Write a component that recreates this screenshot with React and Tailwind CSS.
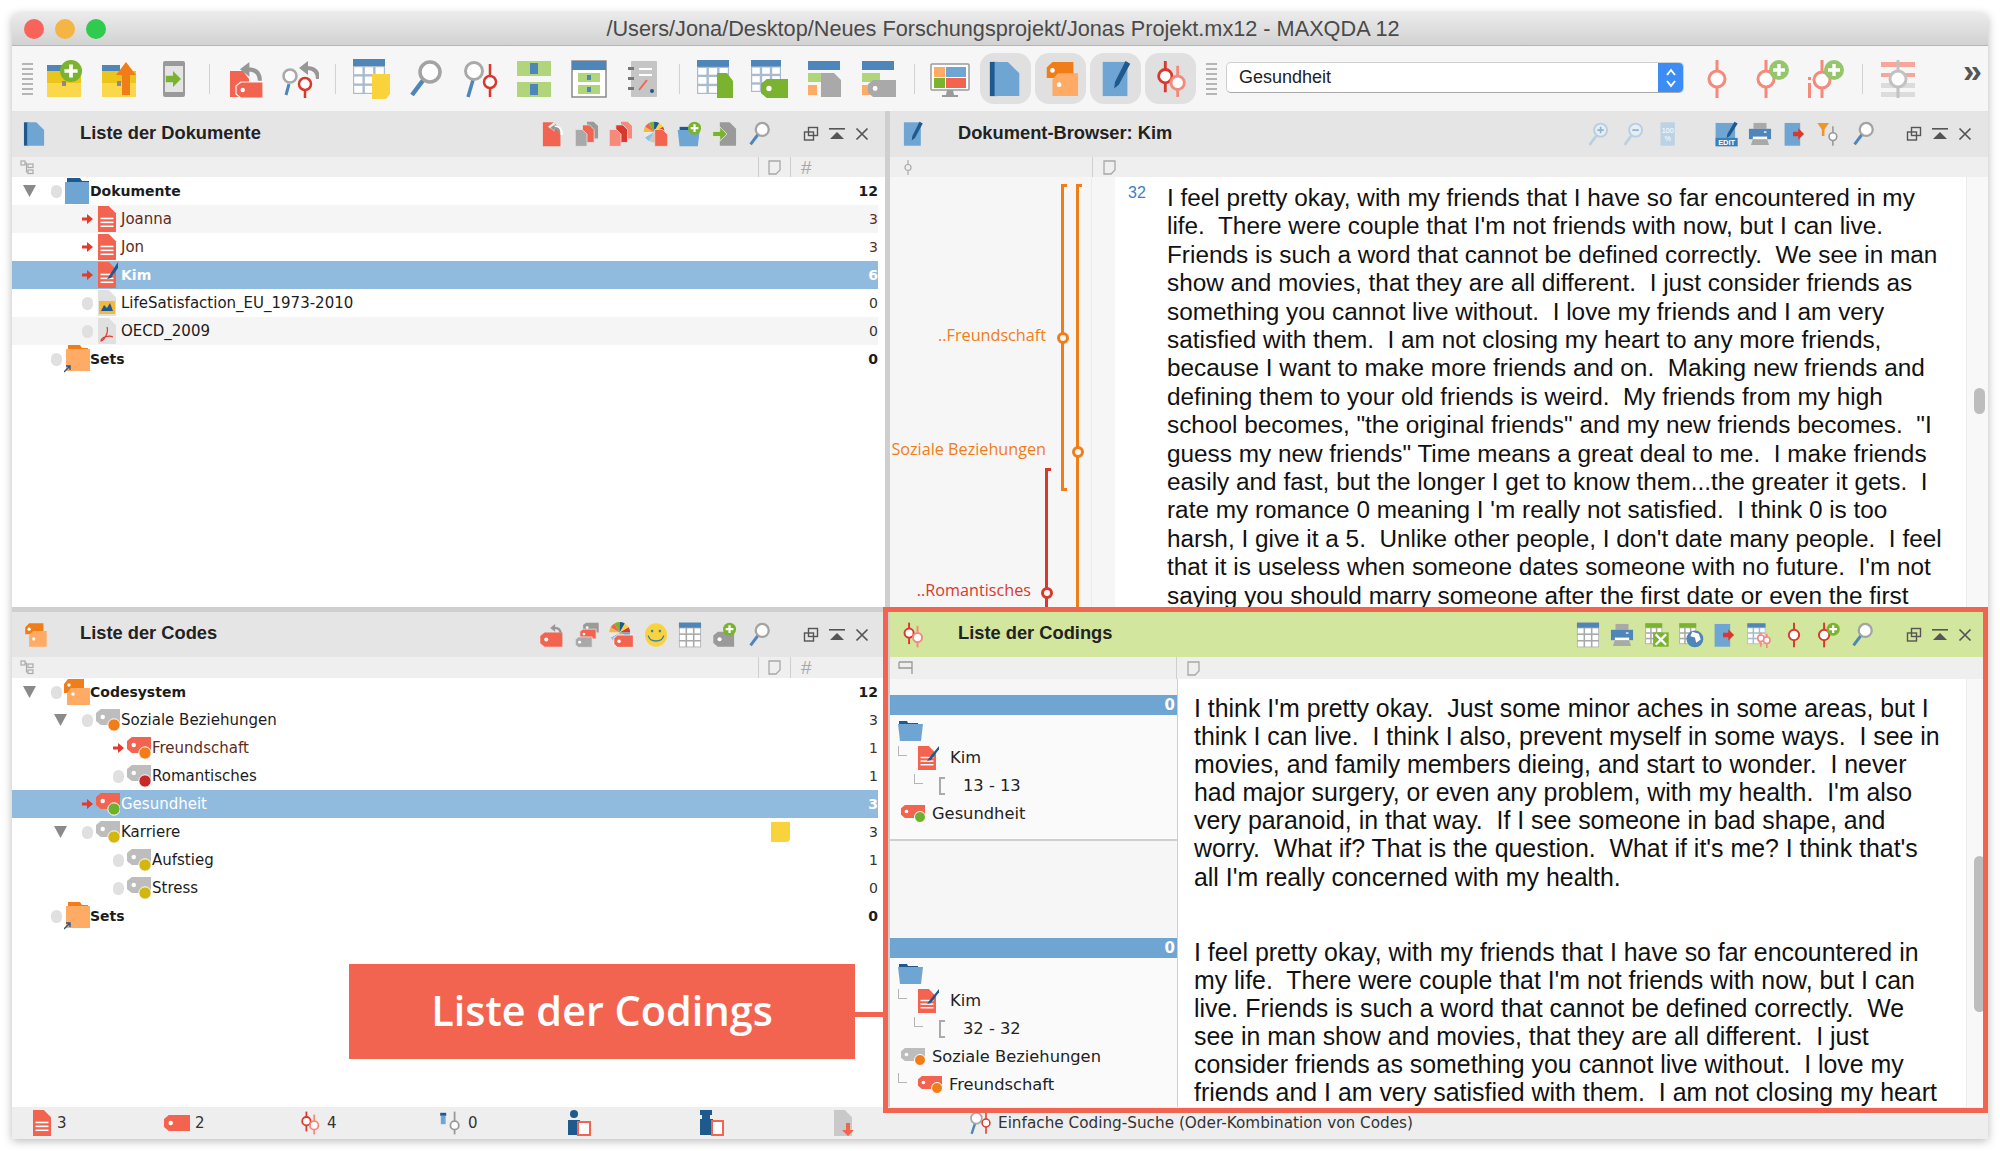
import React from "react";

const RED = "#f26450";
const BLUE = "#6ea5d3";
const NAVY = "#1f5a8f";
const GREEN = "#7ab32e";
const LGREEN = "#b1d57a";
const YELLOW = "#f9d33c";
const GRAY = "#a9a9a9";
const ORANGE = "#f07d18";
const LORANGE = "#ffab66";

const Doc = ({ x = 8, y = 2, w = 24, h = 36, c = RED, lines, edge }) => (
  <g>
    <path d={`M${x} ${y}h${w * 0.6}l${w * 0.4} ${w * 0.4}V${y + h}H${x}z`} fill={c} stroke={edge} strokeWidth={edge ? 1.2 : 0} />
    {lines && [0.45, 0.6, 0.75].map((f) => <rect key={f} x={x + w * 0.14} y={y + h * f} width={w * 0.72} height={h * 0.06} fill="#fff" />)}
  </g>
);
const Tag = ({ x = 4, y = 10, w = 32, h = 20, c = RED, hole = "#fff", edge }) => (
  <g>
    <path d={`M${x + h * 0.3} ${y}H${x + w}V${y + h}H${x + h * 0.3}L${x} ${y + h * 0.75}V${y + h * 0.25}z`} fill={c} stroke={edge} strokeWidth={edge ? 1.2 : 0} />
    <circle cx={x + h * 0.42} cy={y + h * 0.5} r={h * 0.14} fill={hole} />
  </g>
);
const Sign = ({ x = 20, y1 = 2, y2 = 38, cy = 20, r = 6, c = "#d9392c", sw = 2.5 }) => (
  <g>
    <line x1={x} x2={x} y1={y1} y2={y2} stroke={c} strokeWidth={sw} />
    <circle cx={x} cy={cy} r={r} fill="#fff" stroke={c} strokeWidth={sw} />
  </g>
);
const Plus = ({ x = 28, y = 11, r = 10, c = GREEN }) => (
  <g>
    <circle cx={x} cy={y} r={r} fill={c} />
    <path d={`M${x - r * 0.6} ${y}h${r * 1.2}M${x} ${y - r * 0.6}v${r * 1.2}`} stroke="#fff" strokeWidth={r * 0.34} />
  </g>
);
const Grid = ({ x = 4, y = 3, w = 30, h = 34, head = "#4f86ba", line = "#a9bccf", cols = 3, rows = 3 }) => {
  const top = h * 0.2;
  const cw = w / cols;
  const rh = (h - top) / rows;
  return (
    <g>
      <rect x={x} y={y} width={w} height={h} fill={line} />
      <rect x={x} y={y} width={w} height={top} fill={head} />
      {Array.from({ length: cols * rows }).map((_, i) => (
        <rect key={i} x={x + (i % cols) * cw + 1.2} y={y + top + Math.floor(i / cols) * rh + 1.2} width={cw - 2.4} height={rh - 2.4} fill="#fff" />
      ))}
    </g>
  );
};
const Arrow = ({ x = 10, y = 20, c = GREEN, s = 1 }) => (
  <path transform={`translate(${x} ${y}) scale(${s})`} d="M-9 -4h9v-6l10 10l-10 10v-6h-9z" fill={c} />
);
// gray return arrow, curving up and to the left
const BackArrow = ({ x = 0, y = 0, s = 1, c = "#979797" }) => (
  <g transform={`translate(${x} ${y}) scale(${s})`}>
    <path d="M18 17C18 9 14 6 7 6" stroke={c} strokeWidth="4" fill="none" />
    <path d="M8 -1L-1 6l9 7z" fill={c} />
  </g>
);
const Mag = () => (
  <g>
    <line x1="7" y1="36" x2="19" y2="20" stroke="#4f86ba" strokeWidth="4.5" />
    <circle cx="25" cy="13" r="10" fill="#fff" stroke="#a3a3a3" strokeWidth="3.5" />
  </g>
);
const PIE_COLORS = ["#f5b93a", "#f26450", "#7ab32e", "#1f5a8f", "#f9d33c", "#d9392c", "#6ea5d3", "#b1d57a", "#f07d18", "#c9c9c9", "#8fc1e8", "#e9e9e9"];
const Pie = ({ x = 15, y = 15, r = 12 }) => {
  const step = (Math.PI * 2) / PIE_COLORS.length;
  return (
    <g>
      {PIE_COLORS.map((c, i) => {
        const a = -Math.PI + i * step;
        const b = a + step;
        return <path key={c} d={`M${x} ${y}L${x + r * Math.cos(a)} ${y + r * Math.sin(a)}A${r} ${r} 0 0 1 ${x + r * Math.cos(b)} ${y + r * Math.sin(b)}z`} fill={c} />;
      })}
    </g>
  );
};
const Briefcase = () => (
  <g>
    <rect x="3" y="6" width="18" height="9" fill="#4f86ba" />
    <rect x="3" y="12" width="34" height="12" fill="#ebc519" />
    <rect x="3" y="24" width="34" height="14" fill="#fbd84a" />
    <rect x="18" y="22" width="4" height="5" fill="#8a8a8a" />
  </g>
);

const ICONS = {
  addFolder: <><Briefcase /><Plus x={27} y={12} r={11} /></>,
  upFolder: <><Briefcase /><path d="M27 3l10 13h-6v20h-8V16h-6z" fill={ORANGE} /></>,
  tablet: <><rect x="10" y="2" width="22" height="36" rx="2" fill="#9a9a9a" /><rect x="12" y="7" width="18" height="26" fill="#e4e4e4" /><Arrow x={20} y={20} s={0.8} /></>,
  docBack: <><path d="M5 12h13l6 8v18H5z" fill={RED} /><Tag x={11} y={23} w={27} h={16} edge="#f6f6f6" /><BackArrow x={16} y={4} s={1.05} /></>,
  docRet: <><Doc x={6} y={2} w={27} h={37} /><path d="M14 9l9-7l2 5c5 0 12 3 12 14h-4c0-6-4-9-9-9v4z" fill="#fff" /><BackArrow x={18} y={6} s={0.75} /></>,
  tagBack: <><Tag x={2} y={16} w={34} h={22} /><BackArrow x={18} y={4} s={0.85} /></>,
  searchBack: <><line x1="7" y1="36" x2="10" y2="25" stroke="#4f86ba" strokeWidth="3" /><circle cx="11" cy="17" r="6.5" fill="#fff" stroke={GRAY} strokeWidth="2.6" /><BackArrow x={21} y={3} s={1} /><Sign x={26} y1={20} y2={39} cy={25} r={6} /></>,
  tableNote: <><Grid x={2} y={0} w={32} h={35} /><path d="M21 15h18v20l-4 5H21z" fill={YELLOW} /></>,
  mag: <Mag />,
  magCode: <><line x1="8" y1="38" x2="13" y2="21" stroke="#4f86ba" strokeWidth="3.5" /><circle cx="14" cy="12" r="8.5" fill="#fff" stroke={GRAY} strokeWidth="3" /><Sign x={30} y1={5} y2={38} cy={23} r={6} /></>,
  split: <><rect x="3" y="2" width="34" height="15" fill={LGREEN} /><rect x="3" y="23" width="34" height="15" fill={LGREEN} /><rect x="16" y="4" width="8" height="11" fill="#4f86ba" /><rect x="16" y="25" width="8" height="11" fill="#4f86ba" /></>,
  frame: <><rect x="3" y="2" width="34" height="36" fill="#fff" stroke="#8a8a8a" strokeWidth="1.5" /><rect x="3" y="2" width="34" height="9" fill="#4f86ba" /><rect x="9" y="14" width="22" height="9" fill={LGREEN} /><rect x="9" y="26" width="22" height="9" fill={LGREEN} /><rect x="18" y="16" width="4" height="5" fill="#4f86ba" /><rect x="18" y="28" width="4" height="5" fill="#4f86ba" /></>,
  notebook: <><rect x="8" y="2" width="26" height="36" rx="1" fill="#c5c5c5" /><rect x="5" y="8" width="6" height="3" fill="#777" /><rect x="5" y="18" width="6" height="3" fill="#777" /><rect x="5" y="28" width="6" height="3" fill="#777" /><path d="M16 10h13M16 16h13" stroke="#fff" strokeWidth="2" /><path d="M16 31l8-10" stroke={RED} strokeWidth="2" /><circle cx="29" cy="32" r="2" fill={NAVY} /></>,
  tableDoc: <><Grid x={2} y={1} w={32} h={34} /><path d="M22 14h10l6 8v17H22z" fill={GREEN} /></>,
  tableTag: <><Grid x={2} y={1} w={30} h={32} /><Tag x={12} y={20} w={27} h={19} c={GREEN} /></>,
  stackDoc: <><rect x="4" y="2" width="32" height="9" fill="#4f86ba" /><rect x="4" y="14" width="18" height="9" fill={LGREEN} /><rect x="4" y="26" width="9" height="10" fill={LORANGE} /><path d="M17 14h13l7 7v17H17z" fill={GRAY} /></>,
  stackTag: <><rect x="4" y="2" width="32" height="9" fill="#4f86ba" /><rect x="4" y="14" width="18" height="9" fill={LGREEN} /><rect x="4" y="26" width="9" height="10" fill={LORANGE} /><Tag x={10} y={21} w={28} h={17} c={GRAY} /></>,
  monitor: <><rect x="1" y="5" width="38" height="26" rx="1" fill="#fff" stroke="#9a9a9a" strokeWidth="1.5" /><rect x="4" y="8" width="11" height="10" fill={LORANGE} /><rect x="16" y="8" width="20" height="10" fill={BLUE} /><rect x="4" y="19" width="11" height="10" fill={GREEN} /><rect x="16" y="19" width="20" height="10" fill={RED} /><path d="M17 31h6l1 5h4v2H12v-2h4z" fill="#9a9a9a" /></>,
  docs: <><rect x="3" y="2" width="7" height="36" fill={NAVY} /><path d="M8 2h14l12 12v24H8z" fill={BLUE} /></>,
  codes: <><path d="M5 8l6-6h22v17H5z" fill={ORANGE} /><circle cx="11" cy="11" r="2.5" fill="#fff" /><path d="M11 20l6-6h21v24H11z" fill={LORANGE} /><circle cx="18" cy="26" r="2.5" fill="#fff" /></>,
  penDoc: <><rect x="6" y="2" width="26" height="36" fill={BLUE} /><path d="M30 1l5 3l-12 22l-5 4l1-7z" fill={NAVY} /></>,
  redCodes: <><Sign x={14} y1={1} y2={34} cy={17} r={7} c="#d9392c" sw={3} /><Sign x={27} y1={6} y2={39} cy={24} r={7} c="#f58a7c" sw={3} /></>,
  code1: <Sign x={20} y1={1} y2={39} cy={20} r={8} c="#f58a7c" sw={3} />,
  codePlus: <><Sign x={14} y1={1} y2={39} cy={20} r={8} c="#f58a7c" sw={3} /><Plus x={27} y={11} r={10} c="#96c66c" /></>,
  iCodePlus: <><rect x="2" y="24" width="3" height="15" fill="#f58a7c" /><rect x="2" y="18" width="3" height="3" fill="#f58a7c" /><Sign x={16} y1={1} y2={39} cy={21} r={8} c="#f58a7c" sw={3} /><Plus x={28} y={11} r={10} c="#96c66c" /></>,
  sliders: <><rect x="3" y="3" width="34" height="5" fill="#f5a79c" /><rect x="3" y="14" width="34" height="4" fill="#f5a79c" /><rect x="3" y="24" width="34" height="5" fill="#dcdcdc" /><rect x="3" y="33" width="34" height="5" fill="#dcdcdc" /><Sign x={20} y1={1} y2={39} cy={20} r={8} c="#c2c2c2" sw={3} /></>,
  twoDocs: <><Doc x={20} y={1} w={17} h={26} c="#9a9a9a" /><Doc x={13} y={6} w={18} h={27} edge="#e5e5e5" /><Doc x={2} y={13} w={18} h={26} c={GRAY} edge="#e5e5e5" /></>,
  twoReds: <><Doc x={20} y={1} w={17} h={26} c="#f58a7c" /><Doc x={12} y={6} w={18} h={27} c="#d9392c" edge="#e5e5e5" /><Doc x={2} y={13} w={18} h={26} c="#f58a7c" edge="#e5e5e5" /></>,
  pieDoc: <><Pie x={17} y={17} r={16} /><Doc x={18} y={13} w={20} h={26} edge="#e5e5e5" /></>,
  pieTag: <><Pie x={18} y={16} r={16} /><Tag x={9} y={20} w={30} h={19} edge="#fff" /></>,
  blueFolderPlus: <><rect x="4" y="9" width="14" height="6" fill={NAVY} /><path d="M1 14h34l-3 25H4z" fill={BLUE} /><Plus x={27} y={11} r={10} /></>,
  arrowDoc: <><Doc x={12} y={2} w={25} h={36} c="#9a9a9a" /><path d="M1 16h11v-7l11 11l-11 11v-7H1z" fill={GREEN} stroke="#fff" strokeWidth="1" /></>,
  zoomIn: <><line x1="7" y1="37" x2="17" y2="23" stroke="#b8cfe3" strokeWidth="4" /><circle cx="24" cy="14" r="10" fill="#e6edf3" stroke="#b8cfe3" strokeWidth="3" /><path d="M19 14h10M24 9v10" stroke="#8fb3d2" strokeWidth="2.5" /></>,
  zoomOut: <><line x1="7" y1="37" x2="17" y2="23" stroke="#b8cfe3" strokeWidth="4" /><circle cx="24" cy="14" r="10" fill="#e6edf3" stroke="#b8cfe3" strokeWidth="3" /><path d="M19 14h10" stroke="#8fb3d2" strokeWidth="2.5" /></>,
  zoom100: <><rect x="10" y="2" width="22" height="36" fill="#bcd3e6" /><text x="21" y="18" fontSize="11" textAnchor="middle" fill="#fff" fontFamily="Liberation Sans, sans-serif">100</text><text x="21" y="31" fontSize="11" textAnchor="middle" fill="#fff" fontFamily="Liberation Sans, sans-serif">%</text></>,
  edit: <><rect x="4" y="3" width="30" height="35" fill={BLUE} /><path d="M33 1l5 3l-12 19l-5 3l1-6z" fill={NAVY} /><rect x="4" y="26" width="34" height="13" fill="#3b7fb8" /><text x="21" y="36.5" fontSize="11.5" fontWeight="700" textAnchor="middle" fill="#fff" fontFamily="Liberation Sans, sans-serif">EDIT</text></>,
  printer: <><rect x="10" y="3" width="20" height="9" fill="#a9a9a9" /><rect x="3" y="12" width="34" height="16" fill="#4f86ba" /><rect x="26" y="16" width="4" height="2" fill="#fff" /><rect x="9" y="24" width="22" height="4" fill="#fff" /><path d="M9 28h22l3 9H6z" fill="#a9a9a9" /></>,
  docArrow: <><rect x="4" y="3" width="24" height="35" fill={BLUE} /><Arrow x={25} y={20} c="#d9392c" s={0.9} /></>,
  filterCode: <><path d="M2 3h18l-7 10v10h-4V13z" fill="#f0952b" /><Sign x={26} y1={8} y2={38} cy={24} r={6} c="#9a9a9a" sw={2.5} /></>,
  smile: <><ellipse cx="20" cy="20" rx="17" ry="18" fill={YELLOW} /><circle cx="14" cy="14" r="2" fill="#3b7fb8" /><circle cx="26" cy="14" r="2" fill="#3b7fb8" /><path d="M8 21c3 11 21 11 24 0" stroke="#3b7fb8" strokeWidth="2.2" fill="none" /></>,
  table: <Grid x={3} y={1} w={34} h={38} line="#a9a9a9" />,
  tags: <><Tag x={14} y={1} w={24} h={15} c="#9a9a9a" /><Tag x={9} y={11} w={25} h={15} edge="#e5e5e5" /><Tag x={2} y={23} w={26} h={16} c={GRAY} edge="#e5e5e5" /></>,
  tagPlus: <><Tag x={2} y={15} w={32} h={23} c="#9a9a9a" /><Plus x={27} y={11} r={10} /></>,
  excel: <><Grid x={2} y={2} w={26} h={32} head={GREEN} line="#a9a9a9" /><rect x="14" y="16" width="24" height="22" fill={GREEN} /><path d="M18 19l16 16M34 19l-16 16" stroke="#fff" strokeWidth="3.5" /></>,
  tableGlobe: <><Grid x={2} y={2} w={26} h={32} head={GREEN} line="#a9a9a9" /><circle cx="26" cy="26" r="13" fill="#4f86ba" /><path d="M22 15l10 3l3 9l-7 5l-2-8l-7-2z" fill="#fff" /></>,
  tableCodes: <><Grid x={2} y={2} w={28} h={32} /><Sign x={23} y1={16} y2={38} cy={25} r={5} c="#f58a7c" /><Sign x={32} y1={18} y2={40} cy={28} r={5} c="#f58a7c" /></>,
  redCode: <Sign x={20} y1={1} y2={39} cy={20} r={8} c="#d9392c" sw={3} />,
  redCodePlus: <><Sign x={14} y1={1} y2={39} cy={20} r={8} c="#d9392c" sw={3} /><Plus x={28} y={11} r={10} /></>,
};

function Icon({ name, size = 40 }) {
  return (
    <svg width={size} height={size} viewBox="0 0 40 40">
      {ICONS[name]}
    </svg>
  );
}

function Grip() {
  return (
    <div className="flex flex-col gap-[3px] w-[11px] shrink-0">
      {Array.from({ length: 7 }).map((_, i) => (
        <div key={i} className="h-[2px] bg-[#b5b5b5]" />
      ))}
    </div>
  );
}

const Sep = () => <div className="w-px h-[30px] bg-[#d2d2d2] mx-[8px] shrink-0" />;

function Slot({ name }) {
  return (
    <div className="w-[54.5px] flex justify-center shrink-0">
      <Icon name={name} size={40} />
    </div>
  );
}

function ToggleBtn({ name }) {
  return (
    <div className="w-[51px] h-[51px] rounded-[14px] flex items-center justify-center shrink-0 bg-[#e0e0e0]">
      <Icon name={name} size={38} />
    </div>
  );
}

function Toolbar() {
  return (
    <div className="h-[65px] bg-[#f6f6f6] flex items-center pl-[10px] shrink-0">
      <Grip />
      <div className="w-[4px] shrink-0" />
      <Slot name="addFolder" />
      <Slot name="upFolder" />
      <Slot name="tablet" />
      <Sep />
      <Slot name="docBack" />
      <Slot name="searchBack" />
      <Sep />
      <Slot name="tableNote" />
      <Slot name="mag" />
      <Slot name="magCode" />
      <Slot name="split" />
      <Slot name="frame" />
      <Slot name="notebook" />
      <Sep />
      <Slot name="tableDoc" />
      <Slot name="tableTag" />
      <Slot name="stackDoc" />
      <Slot name="stackTag" />
      <Sep />
      <Slot name="monitor" />
      <div className="w-[3px] shrink-0" />
      <div className="flex gap-[4px]">
        <ToggleBtn name="docs" />
        <ToggleBtn name="codes" />
        <ToggleBtn name="penDoc" />
        <ToggleBtn name="redCodes" />
      </div>
      <div className="w-[10px] shrink-0" />
      <Grip />
      <div className="w-[9px] shrink-0" />
      <div className="w-[458px] h-[31px] mt-[-2px] bg-white rounded-[5px] border border-[#cfcfcf] border-b-[#a8a8a8] flex items-center justify-between overflow-hidden shrink-0">
        <span className="pl-[12px] text-[18px] text-[#222] font-['Liberation_Sans',sans-serif]">Gesundheit</span>
        <div className="w-[25px] h-full bg-[#3b8df5] flex items-center justify-center">
          <svg width="14" height="24" viewBox="0 0 14 24" fill="none" stroke="#fff" strokeWidth="2">
            <path d="M3 9l4-5l4 5M3 15l4 5l4-5" />
          </svg>
        </div>
      </div>
      <div className="w-[6px] shrink-0" />
      <Slot name="code1" />
      <Slot name="codePlus" />
      <Slot name="iCodePlus" />
      <Sep />
      <Slot name="sliders" />
      <div className="ml-[38px] text-[34px] leading-none font-bold text-[#555] font-['Liberation_Sans',sans-serif] mt-[-18px]">»</div>
    </div>
  );
}

function WinControls() {
  return (
    <div className="flex items-center">
      <div className="w-[25.5px] flex justify-center">
        <svg width="16" height="16" viewBox="0 0 16 16" fill="none" stroke="#555" strokeWidth="1.4">
          <rect x="5.5" y="1.5" width="9" height="8" />
          <rect x="1.5" y="6" width="9" height="8" />
        </svg>
      </div>
      <div className="w-[25.5px] flex justify-center">
        <svg width="16" height="14" viewBox="0 0 16 14" fill="#555">
          <rect x="0" y="1" width="16" height="1.6" />
          <path d="M8 5l7 7H1z" />
        </svg>
      </div>
      <div className="w-[25.5px] flex justify-center">
        <svg width="14" height="14" viewBox="0 0 14 14" stroke="#555" strokeWidth="1.7">
          <path d="M1.5 1.5l11 11M12.5 1.5l-11 11" />
        </svg>
      </div>
    </div>
  );
}

function PanelHeader({ icon, title, tools, green, short, gap = 22, toolSlot = 34.5 }) {
  return (
    <div className={`flex items-center shrink-0 ${short ? "h-[45px]" : "h-[46px]"} ${green ? "bg-[#d2e69e]" : "bg-[#e5e5e5]"}`}>
      <div className="w-[46px] flex justify-center">
        <Icon name={icon} size={26} />
      </div>
      <span className="ml-[22px] mt-[-3px] text-[18.3px] font-bold text-[#222] whitespace-nowrap font-['Liberation_Sans',sans-serif]">{title}</span>
      <div className="ml-auto flex items-center" style={{ marginRight: gap }}>
        {tools.map((t, i) =>
          t === "gap" ? (
            <div key={i} className="w-[25px] shrink-0" />
          ) : (
            <div key={i} className="flex justify-center shrink-0" style={{ width: toolSlot }}>
              <Icon name={t} size={26} />
            </div>
          )
        )}
      </div>
      <div className="pr-[10px]">
        <WinControls />
      </div>
    </div>
  );
}

const Memo = () => (
  <svg width="13" height="15" viewBox="0 0 13 15" fill="none" stroke="#a8a8a8" strokeWidth="1.3">
    <path d="M1 1h11v9l-4 4H1z" />
  </svg>
);

function TreeSubheader({ height }) {
  return (
    <div className="bg-[#efefef] flex items-center shrink-0" style={{ height }}>
      <svg className="ml-[8px]" width="14" height="15" viewBox="0 0 14 15" fill="none" stroke="#aaa" strokeWidth="1.2">
        <rect x="1" y="1" width="4" height="4" />
        <rect x="8" y="4" width="5" height="3.5" />
        <rect x="8" y="10" width="5" height="3.5" />
        <path d="M5 3h1.5v9H8" />
      </svg>
      <div className="ml-auto flex h-full">
        <div className="w-[32px] border-l border-[#cfcfcf] flex items-center justify-center">
          <Memo />
        </div>
        <div className="w-[95px] border-l border-[#cfcfcf] flex items-center pl-[10px]">
          <span className="text-[#a8a8a8] text-[19px] leading-none font-['Liberation_Sans',sans-serif]">#</span>
        </div>
      </div>
    </div>
  );
}

const Triangle = () => (
  <svg width="15" height="14" viewBox="0 0 15 14">
    <path d="M1 1h13L7.5 13z" fill="#8a8a8a" />
  </svg>
);
const Dot = () => <div className="w-[11px] h-[13px] rounded-full bg-[#e0e0e0]" />;
const RedArrow = () => (
  <svg width="11" height="10" viewBox="0 0 11 10">
    <path d="M0 3.5h5V0l6 5l-6 5V6.5H0z" fill="#e5392c" />
  </svg>
);

function TreeIcon({ kind }) {
  const tag = (base, dot) => (
    <svg width="24" height="26" viewBox="0 0 24 26">
      <Tag x={0} y={2} w={24} h={16} c={base} />
      {dot && <circle cx="18" cy="18" r="6.2" fill={dot} stroke="#fff" strokeWidth="1" />}
    </svg>
  );
  if (kind === "folderBlue")
    return (
      <svg width="24" height="26" viewBox="0 0 24 26">
        <path d="M2 0h13l2 3h7v3H2z" fill={NAVY} />
        <rect x="0" y="4" width="24" height="22" fill={BLUE} />
      </svg>
    );
  if (kind === "sets")
    return (
      <svg width="26" height="28" viewBox="0 0 26 28">
        <path d="M4 0h12l2 3h6v3H4z" fill={ORANGE} />
        <rect x="2" y="4" width="24" height="22" fill={LORANGE} />
        <path d="M0 27l6-6M2 21h4v4" stroke={NAVY} strokeWidth="1.4" fill="none" />
      </svg>
    );
  if (kind === "codesystem")
    return (
      <svg width="26" height="26" viewBox="0 0 26 26">
        <path d="M0 5l4-5h16v14H0z" fill={ORANGE} />
        <circle cx="5" cy="6" r="1.7" fill="#fff" />
        <path d="M3 14l4-5h19v17H3z" fill={LORANGE} />
        <circle cx="9" cy="15" r="1.7" fill="#fff" />
      </svg>
    );
  if (kind === "doc" || kind === "docPen")
    return (
      <svg width="20" height="26" viewBox="0 0 20 26">
        <Doc x={0} y={0} w={18} h={26} lines />
        {kind === "docPen" && <path d="M20 0l-9 14l-2 3l4-1l9-13z" fill={NAVY} />}
      </svg>
    );
  if (kind === "img")
    return (
      <svg width="20" height="26" viewBox="0 0 20 26">
        <Doc x={0} y={0} w={18} h={26} c="#e0e0e0" />
        <rect x="1" y="11" width="16" height="13" fill="#f5b93a" />
        <path d="M3 21l3-6l3 3l3-5l3 8z" fill={NAVY} />
      </svg>
    );
  if (kind === "pdf")
    return (
      <svg width="20" height="26" viewBox="0 0 20 26">
        <Doc x={0} y={0} w={18} h={26} c="#e0e0e0" />
        <path d="M9 9c2 6-3 13-6 14c0-4 8-6 12-4" stroke="#e5392c" strokeWidth="1.2" fill="none" />
      </svg>
    );
  if (kind === "tagOrange") return tag("#bdbdbd", ORANGE);
  if (kind === "tagRedOrange") return tag(RED, ORANGE);
  if (kind === "tagRed") return tag("#bdbdbd", "#c9282b");
  if (kind === "tagRedGreen") return tag(RED, "#6fb02e");
  if (kind === "tagYellow") return tag("#bdbdbd", "#d3b60e");
  return null;
}

function TreeRow({ level = 0, tri, active, icon, text, count, bold, selected, alt, memo }) {
  const bg = selected ? "bg-[#91bbde]" : alt ? "bg-[#f5f5f5]" : "";
  const color = selected ? "text-white" : active ? "text-[#5f2a20]" : "text-[#1c1c1c]";
  return (
    <div className={`h-[28px] flex items-center relative ${bg} ${color}`}>
      {tri && (
        <div className="absolute top-[7px]" style={{ left: 10 + level * 31 }}>
          <Triangle />
        </div>
      )}
      <div className="flex items-center" style={{ marginLeft: 38 + level * 31 }}>
        <div className="w-[12px] flex justify-center">{active ? <RedArrow /> : <Dot />}</div>
        <div className="w-[26px] ml-[2px] flex justify-center">
          <TreeIcon kind={icon} />
        </div>
        <span className={`whitespace-nowrap font-['DejaVu_Sans',sans-serif] ${bold ? "font-bold text-[14px]" : "text-[15px]"}`}>{text}</span>
      </div>
      {memo && <div className="absolute left-[759px] top-[4px] w-[19px] h-[20px] bg-[#f9d33c] rounded-br-[4px]" />}
      <span className={`ml-auto text-[14px] font-['DejaVu_Sans',sans-serif] ${bold || selected ? "font-bold" : ""} ${!bold && !selected && !active ? "text-[#333]" : ""}`}>{count}</span>
    </div>
  );
}

const DOC_TOOLS = ["docRet", "twoDocs", "twoReds", "pieDoc", "blueFolderPlus", "arrowDoc", "mag"];
const CODE_TOOLS = ["tagBack", "tags", "pieTag", "smile", "table", "tagPlus", "mag"];
const BROWSER_TOOLS = ["zoomIn", "zoomOut", "zoom100", "gap", "edit", "printer", "docArrow", "filterCode", "mag"];
const CODING_TOOLS = ["table", "printer", "excel", "tableGlobe", "docArrow", "tableCodes", "redCode", "redCodePlus", "mag"];

function DocsPanel() {
  return (
    <div className="h-[496px] flex flex-col bg-white">
      <PanelHeader icon="docs" title="Liste der Dokumente" tools={DOC_TOOLS} />
      <TreeSubheader height={20} />
      <div className="pr-[7px]">
        <TreeRow tri icon="folderBlue" text="Dokumente" count="12" bold />
        <TreeRow level={1} active icon="doc" text="Joanna" count="3" alt />
        <TreeRow level={1} active icon="doc" text="Jon" count="3" />
        <TreeRow level={1} active selected icon="docPen" text="Kim" count="6" bold />
        <TreeRow level={1} icon="img" text="LifeSatisfaction_EU_1973-2010" count="0" />
        <TreeRow level={1} icon="pdf" text="OECD_2009" count="0" alt />
        <TreeRow icon="sets" text="Sets" count="0" bold />
      </div>
    </div>
  );
}

function CodesPanel() {
  return (
    <div className="flex-1 flex flex-col bg-white">
      <PanelHeader icon="codes" title="Liste der Codes" tools={CODE_TOOLS} short />
      <TreeSubheader height={21} />
      <div className="pr-[7px]">
        <TreeRow tri icon="codesystem" text="Codesystem" count="12" bold />
        <TreeRow tri level={1} icon="tagOrange" text="Soziale Beziehungen" count="3" />
        <TreeRow level={2} active icon="tagRedOrange" text="Freundschaft" count="1" />
        <TreeRow level={2} icon="tagRed" text="Romantisches" count="1" />
        <TreeRow level={1} active selected icon="tagRedGreen" text="Gesundheit" count="3" />
        <TreeRow tri level={1} icon="tagYellow" text="Karriere" count="3" memo />
        <TreeRow level={2} icon="tagYellow" text="Aufstieg" count="1" />
        <TreeRow level={2} icon="tagYellow" text="Stress" count="0" />
        <TreeRow icon="sets" text="Sets" count="0" bold />
      </div>
    </div>
  );
}

const BROWSER_LINES = [
  "I feel pretty okay, with my friends that I have so far encountered in my",
  "life.  There were couple that I'm not friends with now, but I can live.",
  "Friends is such a word that cannot be defined correctly.  We see in man",
  "show and movies, that they are all different.  I just consider friends as",
  "something you cannot live without.  I love my friends and I am very",
  "satisfied with them.  I am not closing my heart to any more friends,",
  "because I want to make more friends and on.  Making new friends and",
  "defining them to your old friends is weird.  My friends from my high",
  'school becomes, "the original friends" and my new friends becomes.  "I',
  'guess my new friends" Time means a great deal to me.  I make friends',
  "easily and fast, but the longer I get to know them...the greater it gets.  I",
  "rate my romance 0 meaning I 'm really not satisfied.  I think 0 is too",
  "harsh, I give it a 5.  Unlike other people, I don't date many people.  I feel",
  "that it is useless when someone dates someone with no future.  I'm not",
  "saying you should marry someone after the first date or even the first",
];

const CODING_ONE = [
  "I think I'm pretty okay.  Just some minor aches in some areas, but I",
  "think I can live.  I think I also, prevent myself in some ways.  I see in",
  "movies, and family members dieing, and start to wonder.  I never",
  "had major surgery, or even any problem, with my health.  I'm also",
  "very paranoid, in that way.  If I see someone in bad shape, and",
  "worry.  What if? That is the question.  What if it's me? I think that's",
  "all I'm really concerned with my health.",
];

const CODING_TWO = [
  "I feel pretty okay, with my friends that I have so far encountered in",
  "my life.  There were couple that I'm not friends with now, but I can",
  "live. Friends is such a word that cannot be defined correctly.  We",
  "see in man show and movies, that they are all different.  I just",
  "consider friends as something you cannot live without.  I love my",
  "friends and I am very satisfied with them.  I am not closing my heart",
];

function TextLines({ lines, className }) {
  return (
    <div className={`text-[#111] font-['Liberation_Sans',sans-serif] ${className}`}>
      {lines.map((l, i) => (
        <div key={i} className="whitespace-pre">
          {l}
        </div>
      ))}
    </div>
  );
}

function Scrollbar({ thumbTop, thumbHeight }) {
  return (
    <div className="w-[22px] shrink-0 bg-[#f8f8f8] border-l border-[#ececec] relative ml-auto">
      <div className="absolute left-[7px] w-[11px] rounded-full bg-[#bdbdbd]" style={{ top: thumbTop, height: thumbHeight }} />
    </div>
  );
}

function CodeBar({ left, top, height, color, dotTop, label, labelRight, tickBottom }) {
  return (
    <>
      <div className="absolute w-[3px]" style={{ left, top, height, background: color }} />
      <div className="absolute h-[3px] w-[6px]" style={{ left, top, background: color }} />
      {tickBottom && <div className="absolute h-[3px] w-[6px]" style={{ left, top: top + height - 3, background: color }} />}
      <div className="absolute w-[12px] h-[12px] rounded-full bg-[#f6f6f6] border-[3px]" style={{ left: left - 4.5, top: dotTop - 6, borderColor: color }} />
      <div className="absolute text-[16.2px] leading-[20px] whitespace-nowrap text-right font-['Open_Sans',sans-serif]" style={{ right: labelRight, top: dotTop - 13, color }}>
        {label}
      </div>
    </>
  );
}

function BrowserPanel() {
  return (
    <div className="h-[496px] flex flex-col bg-white">
      <PanelHeader icon="penDoc" title="Dokument-Browser: Kim" tools={BROWSER_TOOLS} toolSlot={34.3} gap={21} />
      <div className="h-[20px] bg-[#efefef] flex items-center shrink-0">
        <div className="w-[202px] h-full flex items-center pl-[13px]">
          <svg width="10" height="15" viewBox="0 0 10 15" fill="none" stroke="#aaa" strokeWidth="1.2">
            <path d="M5 0v15" />
            <circle cx="5" cy="7.5" r="3" fill="#efefef" />
          </svg>
        </div>
        <div className="h-full border-l border-[#cfcfcf] pl-[10px] flex items-center">
          <Memo />
        </div>
      </div>
      <div className="flex-1 flex overflow-hidden">
        <div className="w-[225px] shrink-0 flex bg-[#f6f6f6] relative">
          <div className="w-[202px] border-r border-[#ececec]" />
          <CodeBar left={171} top={7} height={307} color="#f07d18" dotTop={161} label="..Freundschaft" labelRight={69} tickBottom />
          <CodeBar left={186} top={7} height={440} color="#f07d18" dotTop={275} label="Soziale Beziehungen" labelRight={69} />
          <CodeBar left={155} top={291} height={200} color="#d9392c" dotTop={416} label="..Romantisches" labelRight={84} />
        </div>
        <div className="w-[52px] shrink-0 pt-[6px] pl-[13px] text-[16px] leading-[20px] text-[#3b7fc4] font-['Liberation_Sans',sans-serif]">32</div>
        <div className="pt-[7px] flex-1 overflow-hidden">
          <TextLines lines={BROWSER_LINES} className="text-[24.35px] leading-[28.4px]" />
        </div>
        <Scrollbar thumbTop={211} thumbHeight={26} />
      </div>
    </div>
  );
}

function CodingBlockRow({ left, icon, text, connector }) {
  return (
    <div className="h-[28px] flex items-center relative" style={{ paddingLeft: left }}>
      {connector && <div className="absolute top-[2px] w-[9px] h-[10px] border-l border-b border-[#b5b5b5]" style={{ left: connector }} />}
      {icon}
      <span className="text-[16.3px] text-[#222] whitespace-pre font-['DejaVu_Sans',sans-serif]">{text}</span>
    </div>
  );
}

const TagSmall = ({ base, dot }) => (
  <svg width="25" height="20" viewBox="0 0 25 20" className="mr-[6px] shrink-0">
    <Tag x={0} y={1} w={24} h={13} c={base} />
    <circle cx="19" cy="13" r="5.5" fill={dot} stroke="#fff" strokeWidth="1" />
  </svg>
);
const DocPenSmall = () => (
  <svg width="21" height="25" viewBox="0 0 21 25" className="mr-[11px] shrink-0">
    <Doc x={0} y={0} w={18} h={24} lines />
    <path d="M21 0l-10 12l-2 3l4-1l9-12z" fill={NAVY} />
  </svg>
);
const FolderSmall = () => (
  <svg width="25" height="20" viewBox="0 0 25 20">
    <path d="M1 0h8l1 2h10v2H1z" fill={NAVY} />
    <path d="M0 3h25l-2 17H2z" fill={BLUE} />
  </svg>
);
const BracketSmall = () => (
  <div className="w-[6px] h-[18px] border-l-2 border-t-2 border-b-2 border-[#aaa] mr-[18px]" />
);

function CodingCard({ range, rows, height }) {
  return (
    <div>
      <div className="h-[20px] bg-[#6ea5d3] flex justify-end items-center pr-[2px]">
        <span className="text-[15px] font-bold text-white font-['DejaVu_Sans',sans-serif]">0</span>
      </div>
      <div className="bg-[#fafafa] pt-[3px]" style={{ height }}>
        <div className="pl-[8px] h-[26px] flex items-center">
          <FolderSmall />
        </div>
        <CodingBlockRow left={28} connector={8} icon={<DocPenSmall />} text="Kim" />
        <CodingBlockRow left={49} connector={24} icon={<BracketSmall />} text={range} />
        {rows}
      </div>
    </div>
  );
}

function CodingsPanel() {
  return (
    <div className="flex-1 flex flex-col bg-white overflow-hidden">
      <PanelHeader icon="redCodes" title="Liste der Codings" tools={CODING_TOOLS} green short toolSlot={34.3} gap={22} />
      <div className="h-[22px] bg-[#efefef] flex items-center shrink-0">
        <div className="w-[287px] h-full pl-[8px] flex items-center border-r border-[#cfcfcf]">
          <svg width="15" height="14" viewBox="0 0 15 14" fill="none" stroke="#999" strokeWidth="1.3">
            <path d="M1 1h13v12M1 1v6h13" />
          </svg>
        </div>
        <div className="pl-[10px] flex items-center">
          <Memo />
        </div>
      </div>
      <div className="flex-1 flex overflow-hidden">
        <div className="w-[288px] shrink-0 bg-[#f6f6f6] border-r border-[#cfcfcf] pt-[16px]">
          <div className="border-b-2 border-[#cfcfcf]">
            <CodingCard
              range="13 - 13"
              height={124}
              rows={<CodingBlockRow left={11} icon={<TagSmall base={RED} dot="#6fb02e" />} text="Gesundheit" />}
            />
          </div>
          <div className="h-[97px]" />
          <CodingCard
            range="32 - 32"
            height={150}
            rows={
              <>
                <CodingBlockRow left={11} icon={<TagSmall base="#bdbdbd" dot={ORANGE} />} text="Soziale Beziehungen" />
                <CodingBlockRow left={28} connector={8} icon={<TagSmall base={RED} dot={ORANGE} />} text="Freundschaft" />
              </>
            }
          />
        </div>
        <div className="pl-[16px] pt-[15px] flex-1 overflow-hidden">
          <TextLines lines={CODING_ONE} className="text-[24.9px] leading-[28.1px]" />
          <div className="h-[47px]" />
          <TextLines lines={CODING_TWO} className="text-[24.9px] leading-[28.1px]" />
        </div>
        <Scrollbar thumbTop={177} thumbHeight={156} />
      </div>
    </div>
  );
}

function StatusItem({ width, children, text }) {
  return (
    <div className="flex items-center gap-[5px] shrink-0" style={{ width }}>
      {children}
      {text && <span className="text-[15px] text-[#333] font-['DejaVu_Sans',sans-serif]">{text}</span>}
    </div>
  );
}

function StatusBar() {
  return (
    <div className="h-[32px] bg-[#eeeeee] flex items-center pl-[21px] shrink-0">
      <StatusItem width={131} text="3">
        <svg width="19" height="26" viewBox="0 0 19 26"><Doc x={0} y={0} w={18} h={26} lines /></svg>
      </StatusItem>
      <StatusItem width={134} text="2">
        <svg width="26" height="16" viewBox="0 0 26 16"><Tag x={0} y={0} w={26} h={16} /></svg>
      </StatusItem>
      <StatusItem width={141} text="4">
        <svg width="24" height="26" viewBox="0 0 40 40"><g>{ICONS.redCodes}</g></svg>
      </StatusItem>
      <StatusItem width={128} text="0">
        <svg width="24" height="26" viewBox="0 0 40 40"><rect x="2" y="3" width="10" height="5" fill={NAVY} /><rect x="3" y="8" width="8" height="14" fill={BLUE} /><Sign x={26} y1={1} y2={39} cy={24} r={7} c="#9a9a9a" sw={3} /></svg>
      </StatusItem>
      <StatusItem width={132}>
        <svg width="25" height="26" viewBox="0 0 25 26"><circle cx="7" cy="4" r="4" fill={NAVY} /><path d="M1 10h12v15H1z" fill={NAVY} /><rect x="11" y="12" width="12" height="13" fill="#fff" stroke={RED} strokeWidth="2" /></svg>
      </StatusItem>
      <StatusItem width={135}>
        <svg width="25" height="26" viewBox="0 0 25 26"><rect x="1" y="0" width="12" height="5" fill={NAVY} /><path d="M3 5h8v4h3v16H1V9h2z" fill={NAVY} /><rect x="13" y="11" width="11" height="14" fill="#fff" stroke={RED} strokeWidth="2" /></svg>
      </StatusItem>
      <StatusItem width={134}>
        <svg width="25" height="26" viewBox="0 0 25 26"><Doc x={0} y={0} w={18} h={26} c="#c9c9c9" /><path d="M12 13h4v7h4l-6 6l-6-6h4z" fill={RED} /></svg>
      </StatusItem>
      <div className="flex items-center gap-[6px]">
        <svg width="24" height="24" viewBox="0 0 40 40"><line x1="6" y1="38" x2="12" y2="20" stroke="#4f86ba" strokeWidth="4" /><circle cx="14" cy="12" r="9" fill="#fff" stroke={GRAY} strokeWidth="3" /><Sign x={30} y1={2} y2={38} cy={20} r={6.5} c="#d9392c" sw={2.5} /></svg>
        <span className="text-[15.25px] text-[#333] whitespace-nowrap font-['DejaVu_Sans',sans-serif]">Einfache Coding-Suche (Oder-Kombination von Codes)</span>
      </div>
    </div>
  );
}

export default function App() {
  return (
    <div className="w-[2000px] h-[1151px] bg-white pt-[13px] pl-[12px] relative overflow-hidden">
      <div className="w-[1976px] h-[1126px] flex flex-col rounded-t-[6px] overflow-hidden shadow-[0_2px_10px_rgba(0,0,0,0.28)] bg-white">
        <div className="h-[33px] shrink-0 bg-gradient-to-b from-[#ebebeb] to-[#d2d2d2] border-b border-[#b4b4b4] flex items-center justify-center relative">
          <div className="absolute left-[12px] top-[6px] flex gap-[11px]">
            <div className="w-[20px] h-[20px] rounded-full bg-[#f8635a]" />
            <div className="w-[20px] h-[20px] rounded-full bg-[#f5b544]" />
            <div className="w-[20px] h-[20px] rounded-full bg-[#2ecb4f]" />
          </div>
          <span className="ml-[6px] text-[21.7px] text-[#4a4a4a] font-['Liberation_Sans',sans-serif]">/Users/Jona/Desktop/Neues Forschungsprojekt/Jonas Projekt.mx12 - MAXQDA 12</span>
        </div>
        <Toolbar />
        <div className="flex-1 flex overflow-hidden">
          <div className="w-[873px] shrink-0 flex flex-col">
            <DocsPanel />
            <div className="h-[5px] bg-[#cfcfcf] shrink-0" />
            <CodesPanel />
          </div>
          <div className="w-[5px] bg-[#cfcfcf] shrink-0" />
          <div className="flex-1 flex flex-col min-w-0">
            <BrowserPanel />
            <div className="h-[5px] bg-[#cfcfcf] shrink-0" />
            <CodingsPanel />
          </div>
        </div>
        <StatusBar />
      </div>
      <div className="absolute left-[349px] top-[964px] w-[506px] h-[95px] pb-[3px] bg-[#f26450] flex items-center justify-center">
        <span className="text-[41.4px] font-semibold text-white font-['Open_Sans',sans-serif]">Liste der Codings</span>
      </div>
      <div className="absolute left-[855px] top-[1012px] w-[29px] h-[5px] bg-[#f26450]" />
      <div className="absolute left-[883px] top-[607px] w-[1105px] h-[506px] border-[5px] border-[#f26450] pointer-events-none" />
    </div>
  );
}
